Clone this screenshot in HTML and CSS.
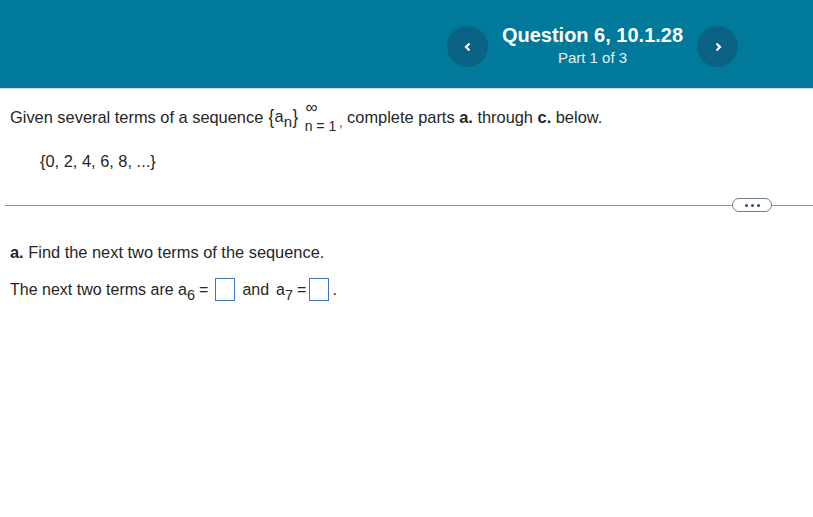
FILE: index.html
```html
<!DOCTYPE html>
<html>
<head>
<meta charset="utf-8">
<link rel="stylesheet" href="styles.css">
</head>
<body>
<header class="topbar">
  <div class="nav">
    <button class="circle"><svg width="10" height="12" viewBox="0 0 10 12"><path d="M6.5 2.5 L3 6 L6.5 9.5" fill="none" stroke="#fff" stroke-width="2.2"/></svg></button>
    <div class="qtitle">
      <div class="qname">Question 6, 10.1.28</div>
      <div class="qpart">Part 1 of 3</div>
    </div>
    <button class="circle"><svg width="10" height="12" viewBox="0 0 10 12"><path d="M3.5 2.5 L7 6 L3.5 9.5" fill="none" stroke="#fff" stroke-width="2.2"/></svg></button>
  </div>
</header>
<main class="content">
  <p class="prompt">Given several terms of a sequence <span class="seq"><span class="brace">{</span><span class="an">a<span class="idx">n</span></span><span class="brace">}</span><span class="lims"><span class="inf">∞</span><span class="nlow">n = 1</span></span></span><span class="comma">,</span> complete parts <b>a.</b> through <b>c.</b> below.</p>
  <p class="terms">{0, 2, 4, 6, 8, ...}</p>
  <div class="divider"><span class="line"></span><button class="more"><span class="dot"></span><span class="dot"></span><span class="dot"></span></button><span class="line short"></span></div>
  <p class="parta"><b>a.</b> Find the next two terms of the sequence.</p>
  <p class="answer">The next two terms are a<span class="idx">6</span><span class="eq eq1">=</span><span class="box"></span><span class="and">and</span>a<span class="idx">7</span><span class="eq eq2">=</span><span class="box"></span><span class="period">.</span></p>
</main>
</body>
</html>
```
FILE: styles.css
```css
html, body { margin: 0; padding: 0; background: #fff; }
body { font-family: "Liberation Sans", Arial, sans-serif; color: #262626; }
.topbar {
  height: 88px;
  background: #00799a;
  border-bottom: 1px solid #d6dbe0;
  display: flex;
  justify-content: flex-end;
}
.nav {
  display: flex;
  align-items: center;
  gap: 7px;
  margin-right: 75px;
  padding-top: 5px;
}
.circle {
  width: 41px; height: 41px;
  border-radius: 50%;
  border: none;
  background: #0b6384;
  display: flex; align-items: center; justify-content: center;
  padding: 0;
}
.qtitle { text-align: center; color: #fff; width: 195px; white-space: nowrap; }
.qname { font-weight: bold; font-size: 20px; line-height: 22px; margin-top: -2px; }
.qpart { font-size: 15px; line-height: 20px; margin-top: 2px; color: #e6f1f5; }
.prompt { margin: 14px 0 0 10px; font-size: 16.4px; line-height: 28px; }
.seq { display: inline-flex; align-items: center; vertical-align: middle; margin-top: -4px; }
.brace { font-size: 20px; line-height: 20px; transform: scaleX(0.85); }
.an { font-size: 16.4px; }
.idx { font-size: 15px; position: relative; top: 5px; }
.lims { display: inline-flex; flex-direction: column; align-items: center; margin-left: 6px; }
.inf { font-size: 17px; line-height: 12px; position: relative; left: -9px; top: 2px; }
.nlow { font-size: 14px; line-height: 14px; margin-top: 7px; white-space: nowrap; }
.comma { font-size: 12px; position: relative; top: 4px; margin-left: 3px; }
.terms { margin: 18px 0 0 40px; font-size: 16.4px; line-height: 20px; }
.divider { display: flex; align-items: center; margin: 27px 0 0 5px; }
.line { flex: 1; height: 1px; background: #8a94a2; }
.line.short { flex: 0 0 41px; }
.more {
  width: 40px; height: 14px;
  border: 1px solid #6e7a8a;
  border-radius: 7px;
  background: #fff;
  padding: 0;
  display: flex; align-items: center; justify-content: center; gap: 3px;
}
.dot { width: 3px; height: 3px; border-radius: 50%; background: #3b4654; }
.parta { margin: 30px 0 0 10px; font-size: 16.4px; line-height: 20px; }
.answer { margin: 16px 0 0 10px; font-size: 16px; line-height: 24px; }
.answer .idx { font-size: 14.5px; }
.eq1 { margin: 0 7px 0 4px; }
.eq2 { margin: 0 3px 0 4px; }
.box {
  display: inline-block;
  width: 18px; height: 21px;
  border: 1px solid #3b74c9;
  vertical-align: -6px;
}
.and { margin: 0 7px 0 7px; }
.period { margin-left: 3px; }
```
